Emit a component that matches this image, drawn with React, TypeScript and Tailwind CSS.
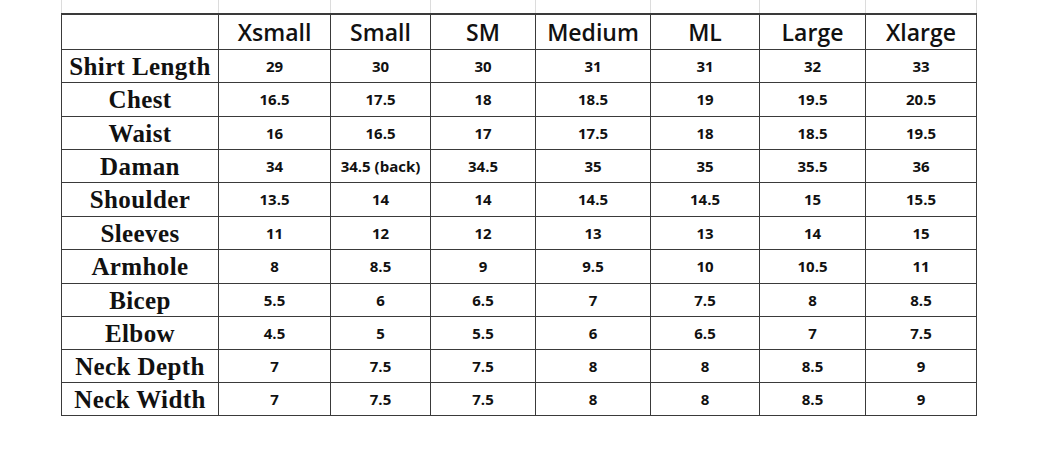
import React from "react";

const sizes = ["Xsmall", "Small", "SM", "Medium", "ML", "Large", "Xlarge"];

const rows: [string, string[]][] = [
  ["Shirt Length", ["29", "30", "30", "31", "31", "32", "33"]],
  ["Chest", ["16.5", "17.5", "18", "18.5", "19", "19.5", "20.5"]],
  ["Waist", ["16", "16.5", "17", "17.5", "18", "18.5", "19.5"]],
  ["Daman", ["34", "34.5 (back)", "34.5", "35", "35", "35.5", "36"]],
  ["Shoulder", ["13.5", "14", "14", "14.5", "14.5", "15", "15.5"]],
  ["Sleeves", ["11", "12", "12", "13", "13", "14", "15"]],
  ["Armhole", ["8", "8.5", "9", "9.5", "10", "10.5", "11"]],
  ["Bicep", ["5.5", "6", "6.5", "7", "7.5", "8", "8.5"]],
  ["Elbow", ["4.5", "5", "5.5", "6", "6.5", "7", "7.5"]],
  ["Neck Depth", ["7", "7.5", "7.5", "8", "8", "8.5", "9"]],
  ["Neck Width", ["7", "7.5", "7.5", "8", "8", "8.5", "9"]],
];

export default function App() {
  return (
    <div className="w-[1040px] h-[464px] bg-white pl-[61px] text-[#111]">
      <div className="grid grid-cols-[157px_112px_100px_105px_115px_109px_106px_111px] h-[13px] w-[916px] border-l border-[#dcdcdc]">
        {Array.from({ length: 8 }).map((_, i) => (
          <div key={i} className="border-r border-[#dcdcdc]" />
        ))}
      </div>
      <div className="grid grid-cols-[157px_112px_100px_105px_115px_109px_106px_111px] grid-rows-[35px_33px_34px_33px_33px_34px_33px_34px_33px_33px_33px_33px] w-[916px] border-l border-t-2 border-[#3a3a3a]">
        <div className="border-r border-b border-[#3a3a3a]" />
        {sizes.map((s) => (
          <div
            key={s}
            className="border-r border-b border-[#3a3a3a] flex items-center justify-center pt-[1px] text-[23px] font-semibold font-['Open_Sans',sans-serif] leading-none"
          >
            {s}
          </div>
        ))}
        {rows.map(([label, vals]) => (
          <React.Fragment key={label}>
            <div className="border-r border-b border-[#3a3a3a] flex items-center justify-center text-[25px] font-bold font-['Liberation_Serif',serif] leading-none tracking-[0.4px]">
              {label}
            </div>
            {vals.map((v, i) => (
              <div
                key={i}
                className="border-r border-b border-[#3a3a3a] flex items-center justify-center text-[15px] font-bold font-['Open_Sans',sans-serif] leading-none"
              >
                {v}
              </div>
            ))}
          </React.Fragment>
        ))}
      </div>
    </div>
  );
}
